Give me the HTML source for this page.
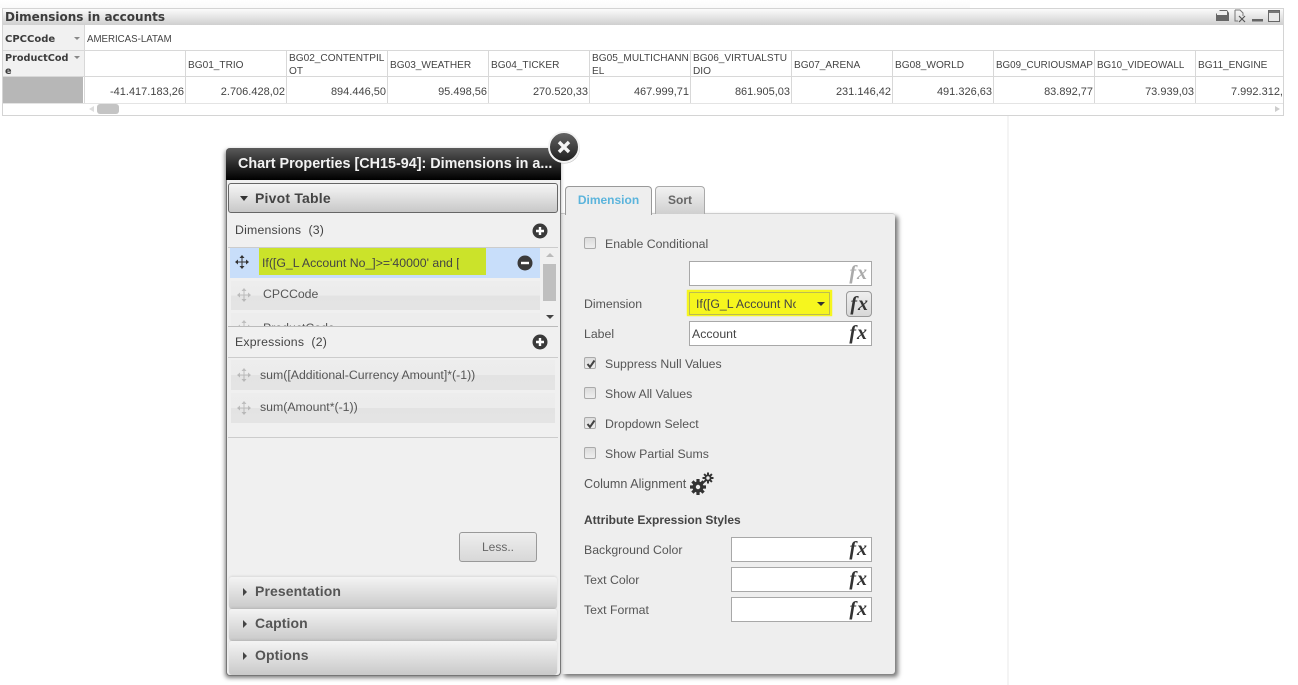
<!DOCTYPE html>
<html><head><meta charset="utf-8"><style>
html,body{margin:0;padding:0;background:#fff}
body{width:1298px;height:685px;position:relative;overflow:hidden;font-family:"Liberation Sans",sans-serif}
div,span{position:absolute;box-sizing:border-box;white-space:nowrap}
svg{position:absolute;overflow:visible}
.h{top:51px;height:25px;width:101px;border-right:1px solid #d8d8d8;font-size:10.1px;color:#444;line-height:13px;padding:1px 0 0 2px}
.h1{line-height:30px;padding-top:0}
.v{top:77px;height:26px;width:101px;border-right:1px solid #d8d8d8;font-size:11px;color:#444;line-height:31px;text-align:right;padding-right:1px;overflow:hidden}
.t{font-size:12.3px;color:#555;line-height:14px}
.acc{left:229px;width:328px;height:32px;background:linear-gradient(#f4f4f4,#c9c9c9);border-radius:3px;box-shadow:0 -1px 2px rgba(0,0,0,.1)}
.acc b{position:absolute;left:26px;top:6px;font-size:14px;color:#555;letter-spacing:.1px;line-height:16px}
.acc i{position:absolute;left:14px;top:11px;width:0;height:0;border-left:4px solid #444;border-top:4px solid transparent;border-bottom:4px solid transparent}
.row{background:linear-gradient(#ededed 0,#ececec 50%,#e3e3e3 50%,#e4e4e4 100%)}
.inp{background:#fff;border:1px solid #a8a8a8;height:25px}
.fx{position:absolute;right:3px;top:-1px;font:italic bold 20px/24px "Liberation Serif",serif;color:#333;letter-spacing:1px}
.cb{left:584px;width:12px;height:12px;border:1px solid #aaa;border-radius:2px;background:linear-gradient(#dcdcdc,#eee)}
.ck{position:absolute;left:1px;top:1px}
</style></head><body>
<div style="left:0;top:0;width:970px;height:8px;background:linear-gradient(#fff,#fafafa)"></div>
<div style="left:1007px;top:115px;width:2px;height:570px;background:#f4f4f4"></div>

<div style="left:2px;top:8px;width:1282px;height:108px;border:1px solid #d4d4d4;background:#fff;overflow:hidden"></div>
<div style="left:3px;top:9px;width:1280px;height:16px;background:linear-gradient(#fbfbfb,#cfcfcf)"></div>
<div style="left:5px;top:9px;font:bold 12px/16px 'DejaVu Sans',sans-serif;color:#3c3c3c">Dimensions in accounts</div>
<svg style="left:1215px;top:9px" width="68" height="15" viewBox="0 0 68 15"><path d="M1 12V5l4-4h7l2 3v8z" fill="#666"/><rect x="2" y="2" width="10" height="4" fill="#eee"/><path d="M20 1h5l3 3v3M20 1v11h3" fill="none" stroke="#777"/><path d="M24 7l6 6M30 7l-6 6" stroke="#555" stroke-width="1.2"/><rect x="37" y="10" width="11" height="2.500" fill="#666"/><rect x="53.500" y="1.500" width="11" height="11" fill="#e8e8e8" stroke="#666"/><rect x="54" y="2" width="10" height="2" fill="#777"/></svg>

<div style="left:3px;top:25px;width:81px;height:51px;background:#f1f1f1"></div>
<div style="left:84px;top:25px;width:1px;height:78px;background:#d8d8d8"></div>
<div style="left:3px;top:50px;width:1280px;height:1px;background:#d8d8d8"></div>
<div style="left:3px;top:76px;width:1280px;height:1px;background:#d8d8d8"></div>
<div style="left:3px;top:103px;width:1280px;height:1px;background:#e4e4e4"></div>
<div style="left:3px;top:77px;width:80px;height:26px;background:#b7b7b7"></div>
<div style="left:5px;top:33px;font:bold 10px/14px 'DejaVu Sans',sans-serif;color:#3c3c3c">CPCCode</div>
<div style="left:74px;top:37px;width:0;height:0;border:3px solid transparent;border-top:3px solid #888"></div>
<div style="left:5px;top:52px;font:bold 9.700px/13px 'DejaVu Sans',sans-serif;color:#3c3c3c">ProductCod<br>e</div>
<div style="left:74px;top:56px;width:0;height:0;border:3px solid transparent;border-top:3px solid #888"></div>
<div style="left:87px;top:33px;font-size:9.700px;line-height:14px;color:#444">AMERICAS-LATAM</div>

<div class="h" style="left:85px"></div>
<div class="h h1" style="left:186px">BG01_TRIO</div>
<div class="h" style="left:287px">BG02_CONTENTPIL<br>OT</div>
<div class="h h1" style="left:388px">BG03_WEATHER</div>
<div class="h h1" style="left:489px">BG04_TICKER</div>
<div class="h" style="left:590px">BG05_MULTICHANN<br>EL</div>
<div class="h" style="left:691px">BG06_VIRTUALSTU<br>DIO</div>
<div class="h h1" style="left:792px">BG07_ARENA</div>
<div class="h h1" style="left:893px">BG08_WORLD</div>
<div class="h h1" style="left:994px;font-size:9.800px">BG09_CURIOUSMAP</div>
<div class="h h1" style="left:1095px;font-size:9.800px">BG10_VIDEOWALL</div>
<div class="h h1" style="left:1196px;border:0">BG11_ENGINE</div>

<div class="v" style="left:85px">-41.417.183,26</div>
<div class="v" style="left:186px">2.706.428,02</div>
<div class="v" style="left:287px">894.446,50</div>
<div class="v" style="left:388px">95.498,56</div>
<div class="v" style="left:489px">270.520,33</div>
<div class="v" style="left:590px">467.999,71</div>
<div class="v" style="left:691px">861.905,03</div>
<div class="v" style="left:792px">231.146,42</div>
<div class="v" style="left:893px">491.326,63</div>
<div class="v" style="left:994px">83.892,77</div>
<div class="v" style="left:1095px">73.939,03</div>
<div class="v" style="left:1196px;width:87px;border:0;text-align:left;padding-left:35px;padding-right:0">7.992.312,</div>
<div style="left:89px;top:106px;width:0;height:0;border:3.500px solid transparent;border-right:5px solid #ddd;border-left:0"></div>
<div style="left:97px;top:104px;width:22px;height:10px;background:#c4c4c4;border-radius:3px"></div>
<div style="left:1275px;top:106px;width:0;height:0;border:3.500px solid transparent;border-left:5px solid #ccc;border-right:0"></div>

<!-- right panel -->
<div style="left:561px;top:213px;width:334px;height:461px;background:#eee;border-radius:0 3px 3px 0;border-top:1px solid #ccc;box-shadow:3px 3px 5px rgba(0,0,0,.55)"></div>
<div style="left:655px;top:186px;width:50px;height:28px;background:linear-gradient(#f2f2f2,#cfcfcf);border:1px solid #aaa;border-bottom:0;border-radius:4px 4px 0 0;font:bold 12px/26px 'Liberation Sans',sans-serif;color:#666;text-align:center">Sort</div>
<div style="left:565px;top:186px;width:87px;height:29px;background:#eee;border:1px solid #999;border-bottom:0;border-radius:4px 4px 0 0;font:bold 12px/26px 'Liberation Sans',sans-serif;color:#5bb4dc;text-align:center">Dimension</div>

<div class="cb" style="top:237px"></div><div class="t" style="left:605px;top:237px">Enable Conditional</div>
<div class="inp" style="left:689px;top:261px;width:183px"><span class="fx" style="color:#aaa">fx</span></div>
<div class="t" style="left:584px;top:297px">Dimension</div>
<div style="left:687px;top:290px;width:145px;height:26px;background:#f6f61e;box-shadow:0 0 1px #ee0"></div>
<div style="left:689px;top:292px;width:141px;height:23px;border:1px solid #bcbc50"></div>
<div style="left:696px;top:297px;width:100px;overflow:hidden;font-size:12.3px;line-height:14px;color:#444">If([G_L Account No</div>
<div style="left:817px;top:302px;width:0;height:0;border:4px solid transparent;border-top:4px solid #333"></div>
<div style="left:846px;top:291px;width:26px;height:26px;background:linear-gradient(#eee,#d8d8d8);border:1px solid #999;border-radius:4px"><span class="fx" style="right:2px;top:0">fx</span></div>
<div class="t" style="left:584px;top:327px">Label</div>
<div class="inp" style="left:689px;top:321px;width:183px"><span class="fx">fx</span><span style="left:2px;top:5px;font-size:12.3px;line-height:14px;color:#444">Account</span></div>

<div class="cb" style="top:357px"><svg class="ck" width="10" height="10"><path d="M1.500 5l2.500 3L8.500 1.500" fill="none" stroke="#444" stroke-width="2"/></svg></div><div class="t" style="left:605px;top:357px">Suppress Null Values</div>
<div class="cb" style="top:387px"></div><div class="t" style="left:605px;top:387px">Show All Values</div>
<div class="cb" style="top:417px"><svg class="ck" width="10" height="10"><path d="M1.500 5l2.500 3L8.500 1.500" fill="none" stroke="#444" stroke-width="2"/></svg></div><div class="t" style="left:605px;top:417px">Dropdown Select</div>
<div class="cb" style="top:447px"></div><div class="t" style="left:605px;top:447px">Show Partial Sums</div>
<div class="t" style="left:584px;top:477px;font-size:12.600px">Column Alignment</div>
<svg style="left:690px;top:472px" width="24" height="24" viewBox="0 0 24 24"><g stroke="#333"><path d="M8 7v16M0 15h16M2.400 9.400l11.200 11.200M13.600 9.400L2.400 20.600" stroke-width="3.200"/><circle cx="8" cy="15" r="5.500" fill="#333" stroke="none"/><circle cx="8" cy="15" r="2.200" fill="#eee" stroke="none"/><path d="M18 .5v11M12.500 6h11M14.100 2.100l7.800 7.800M21.900 2.100l-7.800 7.800" stroke-width="2"/><circle cx="18" cy="6" r="3.500" fill="#333" stroke="none"/><circle cx="18" cy="6" r="1.700" fill="#eee" stroke="none"/></g></svg>
<div style="left:584px;top:513px;font:bold 12px/14px 'Liberation Sans',sans-serif;color:#444">Attribute Expression Styles</div>
<div class="t" style="left:584px;top:543px">Background Color</div>
<div class="inp" style="left:731px;top:537px;width:141px"><span class="fx">fx</span></div>
<div class="t" style="left:584px;top:573px">Text Color</div>
<div class="inp" style="left:731px;top:567px;width:141px"><span class="fx">fx</span></div>
<div class="t" style="left:584px;top:603px">Text Format</div>
<div class="inp" style="left:731px;top:597px;width:141px"><span class="fx">fx</span></div>

<!-- left panel -->
<div style="left:226px;top:148px;width:335px;height:528px;background:#f0f0f0;border:1px solid #777;border-top:0;border-radius:4px 4px 4px 4px;box-shadow:-1px 2px 4px rgba(0,0,0,.5)"></div>
<div style="left:226px;top:148px;width:335px;height:32px;background:linear-gradient(#5a5a5a,#2a2a2a 50%,#000);border-radius:4px 4px 0 0;font:bold 14.360px/33px 'Liberation Sans',sans-serif;color:#f2f2f2;padding-left:12px">Chart Properties [CH15-94]: Dimensions in a...</div>

<div style="left:228px;top:183px;width:330px;height:30px;background:linear-gradient(#f6f6f6,#c8c8c8);border:1px solid #666;border-radius:3px"></div>
<div style="left:240px;top:196px;width:0;height:0;border:4px solid transparent;border-top:5px solid #333;border-bottom:0"></div>
<div style="left:255px;top:190px;font:bold 14px/16px 'Liberation Sans',sans-serif;color:#444;letter-spacing:.2px">Pivot Table</div>

<div class="t" style="left:235px;top:223px;color:#444;letter-spacing:.2px">Dimensions&nbsp; (3)</div>
<svg style="left:532px;top:223px" width="16" height="16"><circle cx="8" cy="8" r="7.500" fill="#3a3a3a"/><path d="M8 4v8M4 8h8" stroke="#fff" stroke-width="2.400"/></svg>
<div style="left:228px;top:247px;width:330px;height:1px;background:#ccc"></div>
<div style="left:230px;top:248px;width:310px;height:30px;background:#c8defa"></div>
<div style="left:259px;top:248px;width:227px;height:27px;background:#cbe32a"></div>
<div style="left:262px;top:256px;width:197px;overflow:hidden;font-size:12.3px;line-height:14px;color:#444">If([G_L Account No_]&gt;='40000' and [G_L</div>
<svg style="left:235px;top:255px" width="14" height="14"><path d="M7 0l2.500 3h-5zM7 14l2.500-3h-5zM0 7l3-2.500v5zM14 7l-3-2.500v5z" fill="#333"/><path d="M7 2v10M2 7h10" stroke="#333"/></svg>
<svg style="left:517px;top:255px" width="16" height="16"><circle cx="8" cy="8" r="7.500" fill="#3a3a3a"/><path d="M4 8h8" stroke="#fff" stroke-width="2.400"/></svg>

<div class="row" style="left:231px;top:281px;width:309px;height:29px"></div>
<div class="t" style="left:263px;top:287px">CPCCode</div>
<svg style="left:237px;top:288px" width="14" height="14" opacity=".3"><path d="M7 0l2.500 3h-5zM7 14l2.500-3h-5zM0 7l3-2.500v5zM14 7l-3-2.500v5z" fill="#555"/><path d="M7 2v10M2 7h10" stroke="#555"/></svg>
<div style="left:231px;top:313px;width:309px;height:13px;overflow:hidden;background:#ededed"><span class="t" style="left:32px;top:8px">ProductCode</span><svg style="left:6px;top:7px" width="14" height="14" opacity=".3"><path d="M7 0l2.500 3h-5zM7 14l2.500-3h-5zM0 7l3-2.500v5zM14 7l-3-2.500v5z" fill="#555"/><path d="M7 2v10M2 7h10" stroke="#555"/></svg></div>

<div style="left:543px;top:248px;width:13px;height:78px;background:#f0f0f0"></div>
<div style="left:546px;top:253px;width:0;height:0;border:4px solid transparent;border-bottom:4px solid #bbb;border-top:0"></div>
<div style="left:543px;top:264px;width:13px;height:37px;background:#bfbfbf"></div>
<div style="left:546px;top:315px;width:0;height:0;border:4px solid transparent;border-top:4px solid #444;border-bottom:0"></div>

<div style="left:228px;top:326px;width:330px;height:1px;background:#bbb"></div>
<div class="t" style="left:235px;top:335px;color:#444;letter-spacing:.2px">Expressions&nbsp; (2)</div>
<svg style="left:532px;top:334px" width="16" height="16"><circle cx="8" cy="8" r="7.500" fill="#3a3a3a"/><path d="M8 4v8M4 8h8" stroke="#fff" stroke-width="2.400"/></svg>
<div style="left:228px;top:357px;width:330px;height:1px;background:#ccc"></div>
<div class="row" style="left:231px;top:360px;width:324px;height:30px"></div>
<div class="t" style="left:260px;top:368px">sum([Additional-Currency Amount]*(-1))</div>
<svg style="left:237px;top:368px" width="14" height="14" opacity=".3"><path d="M7 0l2.500 3h-5zM7 14l2.500-3h-5zM0 7l3-2.500v5zM14 7l-3-2.500v5z" fill="#555"/><path d="M7 2v10M2 7h10" stroke="#555"/></svg>
<div class="row" style="left:231px;top:393px;width:324px;height:30px"></div>
<div class="t" style="left:260px;top:400px">sum(Amount*(-1))</div>
<svg style="left:237px;top:401px" width="14" height="14" opacity=".3"><path d="M7 0l2.500 3h-5zM7 14l2.500-3h-5zM0 7l3-2.500v5zM14 7l-3-2.500v5z" fill="#555"/><path d="M7 2v10M2 7h10" stroke="#555"/></svg>
<div style="left:228px;top:437px;width:330px;height:1px;background:#ccc"></div>

<div style="left:459px;top:532px;width:78px;height:30px;background:linear-gradient(#eee,#d8d8d8);border:1px solid #999;border-radius:3px;font-size:12px;line-height:28px;color:#666;text-align:center">Less..</div>

<div class="acc" style="top:577px"><i></i><b>Presentation</b></div>
<div class="acc" style="top:609px"><i></i><b>Caption</b></div>
<div class="acc" style="top:641px;height:34px"><i></i><b>Options</b></div>

<svg style="left:546px;top:129px" width="36" height="36"><defs><linearGradient id="g" x1="0" y1="0" x2="0" y2="1"><stop offset="0" stop-color="#666"/><stop offset="1" stop-color="#1c1c1c"/></linearGradient></defs><circle cx="18.500" cy="19" r="15.500" fill="#000" opacity=".25"/><circle cx="18" cy="18" r="15" fill="url(#g)" stroke="#f4f4f4" stroke-width="2"/><path d="M13 13l10 10M23 13l-10 10" stroke="#f4f4f4" stroke-width="3.400"/></svg>
</body></html>
